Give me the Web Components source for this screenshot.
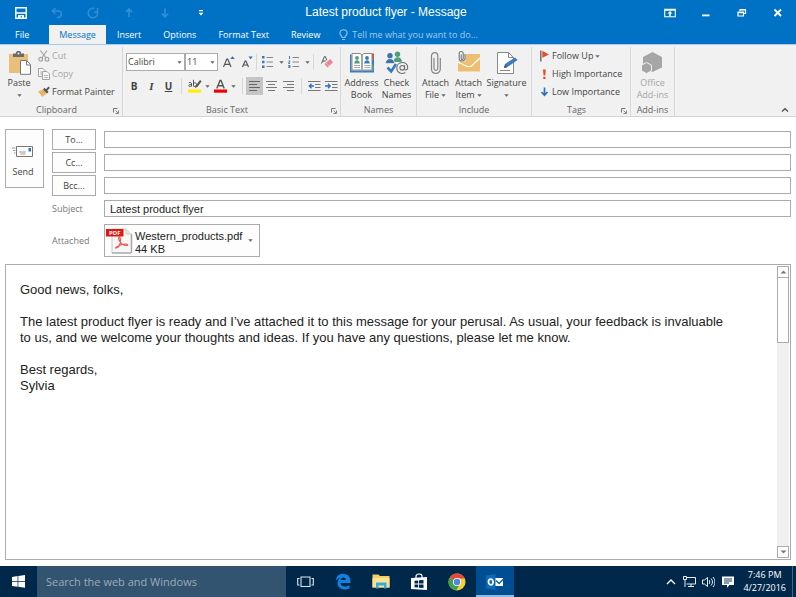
<!DOCTYPE html>
<html lang="en">
<head>
<meta charset="utf-8">
<title>Latest product flyer - Message</title>
<style>
  html, body { height: 100%; margin: 0; }
  body { background: #fff; font: 9px/12px "Open Sans", "Noto Sans", sans-serif; color: #444; }
</style>
</head>
<body>
<mail-window></mail-window>
<script>
const icons = {
  save: [12, 12, '<path d="M.8.8h10.4v10.4H.8z" fill="none" stroke="#fff" stroke-width="1.4"/><path d="M1 5.3h10v1.4H1zM3 8h6v3.5H7V9.2H5.6v2.3H3z" fill="#fff"/>'],
  undo: [12, 12, '<path d="M4.5 1 1.2 4 4.5 7M1.500 4h5.800c4 0 4 5.800.2 6.500H6" fill="none" stroke="#338fd3" stroke-width="1.5"/>'],
  redo: [12, 12, '<path d="M7.200 1.500A4.700 4.700 0 1 0 10.500 5M7 5h3.500V1" fill="none" stroke="#338fd3" stroke-width="1.5"/>'],
  up: [10, 12, '<path d="M5 10V2M1.800 5.300 5 2l3.200 3.300" fill="none" stroke="#338fd3" stroke-width="1.600"/>'],
  down: [10, 12, '<path d="M5 1.500v8M1.800 6.500 5 9.800l3.200-3.300" fill="none" stroke="#338fd3" stroke-width="1.600"/>'],
  custom: [6, 6, '<path d="M1 0h4v1.200H1zM.5 2.800h5L3 5.500z" fill="#fff"/>'],
  ribbonopt: [12, 10, '<path d="M.7 1.200h10.600v7.600H.7zM.7 2.300h10.600" fill="none" stroke="#fff" stroke-width="1.100"/><path d="M6 3 3.500 5.600h1.700v2.600h1.600V5.600h1.700z" fill="#fff"/>'],
  minimize: [10, 10, '<path d="M1 6.500h7.500v1.800H1z" fill="#fff"/>'],
  restore: [10, 10, '<path d="M3 3V1.500h5.500V5.500H7.200M1 4h5.500v4H1zM1 4.600h5.500M3 2h5.500" fill="none" stroke="#fff" stroke-width="1.200"/>'],
  close: [10, 10, '<path d="m1.500 1.500 6.500 6.500M8 1.500 1.500 8" stroke="#fff" stroke-width="1.800"/>'],
  bulb: [9, 12, '<path d="M3 8.500C3 6.500.9 6.300.9 4a3.600 3.200 0 0 1 7.200 0C8.100 6.300 6 6.500 6 8.500zM3 10.500h3" fill="none" stroke="#8fc4ee" stroke-width="1.100"/>'],
  arrow: [5, 3, '<path d="M.3.3h4.400L2.500 2.700z" fill="#666"/>'],
  launch: [6, 6, '<path d="M.5 4.500v-4h4" fill="none" stroke="#777"/><path d="M2.500 2.500 5 5M5.500 2.500v3h-3" fill="none" stroke="#777" stroke-width=".9"/>'],
  collapse: [8, 6, '<path d="M1 4.500 4 1.700l3 2.800" fill="none" stroke="#555" stroke-width="1.400"/>'],
  paste: [24, 24, '<path d="M2 3h19v19H2z" fill="#e9c07b"/><path d="M6 6V2.500h2.800a2.700 2.700 0 0 1 5.400 0H17V6z" fill="#6a6a6a"/><circle cx="11.500" cy="2.600" r="1" fill="#f1f1f1"/><path d="M13.500 9.500h6l4 4v9.800h-10z" fill="#fff" stroke="#777"/><path d="M19.500 9.500v4.500h4" fill="none" stroke="#777"/>'],
  cut: [12, 12, '<g fill="none" stroke="#a3a3a3" stroke-width="1.200"><path d="M2.500.5 8 8M9 .5 3.800 8"/><circle cx="2.700" cy="9.300" r="1.900"/><circle cx="9" cy="9.300" r="1.900"/></g>'],
  copy: [12, 12, '<g fill="#f8f8f8" stroke="#a3a3a3"><path d="M.5.5h4.500l2 2V8.500H.5z"/><path d="M4.500 3.500H9l2.500 2.500v5.500h-7z"/><path d="M2 4h2M2 6h2M6 7.500h4M6 9.500h4" stroke-width=".8"/></g>'],
  painter: [12, 12, '<path d="M5 3.500 9 7.500 6.500 9 4.500 11 0 5.500z" fill="#e9b55e"/><path d="m5 3.500 1.500-1.700L8 3.200 10.500.6l1.400 1.300L9.300 4.600 10.500 6 9 7.500z" fill="#555"/>'],
  grow: [12, 12, '<path d="M.5 11 3.800 3h.9L8 11M1.800 8.300h5" fill="none" stroke="#555" stroke-width="1.200"/><path d="M7.200 3 9.500.3 11.800 3z" fill="#2b72b8"/>'],
  shrink: [12, 12, '<path d="M1.500 11 4.100 5h.8L7.500 11M2.500 9h4" fill="none" stroke="#555" stroke-width="1.200"/><path d="M7.500.6h4.300L9.600 3.200z" fill="#2b72b8"/>'],
  bullets: [12, 12, '<path d="M0 0h2.500v2.500H0zM0 4.700h2.500v2.500H0zM0 9.500h2.500V12H0z" fill="#3c7ab8"/><path d="M4.500 1.500H11M4.500 6H11M4.500 10.500H11" stroke="#888"/>'],
  numbers: [12, 12, '<path d="M1.500 0v3M.5 5h1.500L.5 7.500H2M.3 9.500H2v2H.3M.6 10.500H2" fill="none" stroke="#3c7ab8"/><path d="M4.500 1.500H11M4.500 6H11M4.500 10.500H11" stroke="#888"/>'],
  eraser: [12, 12, '<path d="m.5 7.500 3-7h.8l1.500 3.800M1.800 5h3" fill="none" stroke="#555"/><path d="m3.500 8 5.700-5L12 6.300 6.500 11.500z" fill="#ea8491"/><path d="m5 6.600 3 3.500" stroke="#f6c1c8" stroke-width=".8"/>'],
  hilite: [14, 14, '<path d="M0 10.500h13v3.200H0z" fill="#ffee00"/><g fill="none" stroke="#555"><path d="M.8 3.800c1.500-.8 2.700-.3 2.700 1v2.700M3.500 5.500C.2 5.200.2 7.500 1.700 7.500c1 0 1.800-.6 1.800-1.500M5.500.8v6.700"/><path d="M5.500 4.500c1-1.300 3-.8 3 1s-2 2.500-3 1.300"/></g><path d="m7 9 .8-2.500L12 1l1.600 1.200L9.300 8z" fill="#555"/>'],
  fontcolor: [14, 14, '<path d="M0 10.500h13v3.200H0z" fill="#f00000"/><path d="M2.800 9.500 6 1.500h1l3.200 8M4 6.800h5" fill="none" stroke="#555" stroke-width="1.400"/>'],
  left: [12, 12, '<path d="M0 1.500h11M0 4.500h8M0 7.500h11M0 10.500h8" stroke="#666"/>'],
  center: [12, 12, '<path d="M0 1.500h11M2 4.500h7M0 7.500h11M2 10.500h7" stroke="#777"/>'],
  right: [12, 12, '<path d="M0 1.500h11M4 4.500h7M0 7.500h11M4 10.500h7" stroke="#777"/>'],
  outdent: [13, 12, '<path d="M0 1.500h12.500M7 4.500h5.500M7 7.500h5.500M0 10.500h12.500" stroke="#777"/><path d="M6 6H1.500M3.500 3.800 1.300 6l2.200 2.200" fill="none" stroke="#2b72b8" stroke-width="1.300"/>'],
  indent: [13, 12, '<path d="M0 1.500h12.500M7 4.500h5.500M7 7.500h5.500M0 10.500h12.500" stroke="#777"/><path d="M0 6h5M3 3.800l2.200 2.200L3 8.200" fill="none" stroke="#2b72b8" stroke-width="1.300"/>'],
  address: [24, 22, '<path d="M0 2.500h1.500v16h9.500l1 1 1-1h9.500v-16H24V20.500H0z" fill="#3a7cbd"/><path d="M2 1.500h8l2 1.500v16l-2-1H2zM22 1.500h-8L12 3v16l2-1h8z" fill="#fff" stroke="#888"/><path d="M22.200 1.500H24v5h-1.800z" fill="#d9502f"/><path d="M22.200 7.500H24v5h-1.800z" fill="#3a7cbd"/><path d="M22.200 13.500H24v4h-1.800z" fill="#4d9f77"/><circle cx="7" cy="6" r="1.900" fill="#4d9f77"/><path d="M4.200 11.500c0-4.500 5.600-4.500 5.600 0z" fill="#4d9f77"/><circle cx="17" cy="6" r="1.900" fill="#3a7cbd"/><path d="M14.200 11.500c0-4.500 5.600-4.500 5.600 0z" fill="#3a7cbd"/><path d="M4 13.500h6M4 15.500h6M14.500 13.500h6M14.500 15.500h6" stroke="#aaa"/>'],
  check: [24, 24, '<circle cx="12.500" cy="3.300" r="2.700" fill="#4d9f77"/><path d="M8.500 11c0-6.500 8.500-6.500 8.500 0z" fill="#4d9f77"/><circle cx="5" cy="4.700" r="2.700" fill="#3a72ad"/><path d="M.5 12.500c0-6.500 9-6.500 9 0z" fill="#3a72ad" stroke="#f1f1f1" stroke-width=".7"/><path d="m2.500 16.500 3.700 4L11 13" fill="none" stroke="#3378c0" stroke-width="2.600"/><circle cx="17.500" cy="17" r="6.500" fill="#f1f1f1"/><g fill="none" stroke="#707070" stroke-width="1.100"><circle cx="17.200" cy="16.800" r="2.300"/><path d="M19.600 14.200v3.600c0 2 3.100 1.600 3.100-1.300 0-7-11.200-6.500-10.900.7.200 5.200 5.300 6.300 8.600 4.300"/></g>'],
  clip: [12, 24, '<path d="M4 7v10.500c0 2.500 3.800 2.500 3.800 0V5c0-4.500-6.300-4.500-6.300 0v13c0 5.800 8.800 5.800 8.800 0V7" fill="none" stroke="#858585" stroke-width="1.200"/>'],
  item: [24, 24, '<path d="M1 3h22v17.500H1z" fill="#ecbf72"/><path d="m1 11 9 4.500h4L23 7" fill="none" stroke="#fff" stroke-width="1.100"/><path d="M1 0h7.500v10.500H1z" fill="#f1f1f1"/><path d="M4.200 3.500v4c0 1.500 2 1.500 2 0v-5c0-2.600-4-2.600-4 0v5.200c0 3 5.800 3 5.800 0V3" fill="none" stroke="#777" stroke-width="1.100"/>'],
  sign: [22, 24, '<path d="M1.500 1.500h11l5 5v16h-16z" fill="#fff" stroke="#888"/><path d="M12.500 1.500v5h5" fill="none" stroke="#888"/><path d="m8 16.500 1-3.500L19 6.500 21.500 9l-10 7z" fill="#3a7cbd"/><path d="m8 17 1.200-3 2 2.200z" fill="#444"/><path d="M4 19.500h10" stroke="#888"/>'],
  flag: [10, 12, '<path d="M.8.500v11" stroke="#666" stroke-width="1.400"/><path d="M2.300.8 9 4.400 2.300 7.800z" fill="#e0502c"/>'],
  high: [10, 12, '<path d="M3 1.500h2.800l-.5 6H3.500zM3.300 8.800h2.200V11H3.300z" fill="#e0502c"/>'],
  low: [10, 12, '<path d="M4.500 1.500v7.500M1.500 6l3 3.300L7.500 6" fill="none" stroke="#2f73b7" stroke-width="1.700"/>'],
  addins: [24, 24, '<path d="M11.500 1 21 6v10.500L11.500 21 2 15.800V6z" fill="#a6a6a6"/><path d="m5.500 11.500 5 2.700v5.600l-5 2.700-5-2.700v-5.600z" fill="#a6a6a6" stroke="#f1f1f1"/>'],
  send: [22, 12, '<path d="M4.500.5h16v10h-16z" fill="#fff" stroke="#777"/><path d="M0 2h3.500M1 4.500h2.500M2 7h1.500M7 6h7M8.500 8h5" stroke="#999"/><path d="M16.500 2h2.500v3.500h-2.500z" fill="#3474b3"/>'],
  pdf: [28, 26, '<path d="M6 1h14l5 5v19H6z" fill="#f7f7f7" stroke="#c8c8c8"/><path d="M20 1v5h5" fill="#e6e6e6" stroke="#ccc"/><path d="M6 25h19M25.700 6v19" stroke="#999"/><path d="M10 20c4-1 5.500-7 4-10.500-.8-1.300-2 .5-1 2.500 1.500 3 4 5.500 7.500 5.500 2 0 1.500-1.500-1-1.500-3 0-6 1-8.500 2.700-1.400 1-1.700 1.600-1 1.300z" fill="none" stroke="#ed5751" stroke-width="1.200"/><path d="M0 1h17.500v7.500H0z" fill="#e0160d"/><text x="3" y="7" font-family="Open Sans" font-weight="700" font-size="6" fill="#fff">PDF</text>'],
  sbup: [7, 4, '<path d="M3.500.5 6.500 3.500H.5z" fill="#777"/>'],
  sbdown: [7, 4, '<path d="M.5.5h6l-3 3z" fill="#777"/>'],
  windows: [13, 13, '<path d="m0 1.900 5.600-.8V6H0zM6.300 1 13 0v6H6.300zM0 6.700h5.600v5L0 10.900zM6.300 6.700H13v6l-6.700-.9z" fill="#fff"/>'],
  taskview: [17, 12, '<path d="M4 1h9v9.500H4zM2.500 2.500H.7V9h1.800M14.500 2.500h1.800V9h-1.800" fill="none" stroke="#dfe6ec" stroke-width="1.100"/>'],
  edge: [16, 17, '<path d="M.8 8C1.300 3 4 .8 8 .8c5 0 7.500 3.600 7.500 7.700v1.600H5.500c.3 4 5.500 4.200 9 2.200v3.200C8.500 18 2.800 15.800 2.500 10.300 2.400 7.500 4 5.600 6 4.700 3.600 5 2 6.300.8 8zm4.900-1h5.100c0-3.500-4.700-3.500-5.100 0z" fill="#1380e0"/>'],
  folder: [18, 15, '<path d="M.5.5h6L8 2h9.500v11.500H.5z" fill="#f3cf62"/><path d="M.5 4h17v9.500H.5z" fill="#fbe394"/><path d="M4 8.500h10.500v6H12v-3H6.500v3H4z" fill="#37a9e1"/>'],
  store: [16, 18, '<path d="M0 5 16 4v13L0 16z" fill="#fff"/><path d="M5 5.500V3.500c0-3 6-3.500 6-.5v2" fill="none" stroke="#fff" stroke-width="1.200"/><path d="m3.500 7.800 3.700-.4v3.200H3.500zM8 7.300l4.500-.4v3.700H8zM3.500 11.400h3.700v3.200l-3.700-.4zM8 11.400h4.500v3.700L8 14.700z" fill="#00284b"/>'],
  chrome: [18, 18, '<circle cx="9" cy="9" r="8.500" fill="#f8cf35"/><path d="M9 9 1.600 4.800A8.500 8.500 0 0 1 16.400 4.800L16.800 5.500H9z" fill="#e24a3b"/><path d="M9 9 1.600 4.800A8.500 8.500 0 0 0 8.200 17.500L12 11z" fill="#3ea152"/><circle cx="9" cy="9" r="4" fill="#fff"/><circle cx="9" cy="9" r="3.200" fill="#4a86e8"/>'],
  outlook: [18, 16, '<path d="M9 4h8v8H9z" fill="#fff"/><path d="m10 6.500 3 3 4.500-4.500" fill="none" stroke="#0b62ab" stroke-width="1.500"/><path d="M0 1.500 9.500 0v16L0 14.500z" fill="#0c68b8"/><ellipse cx="4.800" cy="8" rx="2.300" ry="2.800" fill="none" stroke="#fff" stroke-width="1.700"/>'],
  trayup: [10, 8, '<path d="m1 6 4-4 4 4" fill="none" stroke="#fff" stroke-width="1.300"/>'],
  network: [13, 12, '<path d="M3.500 1.500h9v6.500h-9M8 8v2.500M5 10.500h6M.5.500h3v3h-3zM2 3.500V11" fill="none" stroke="#e8edf2"/>'],
  sound: [13, 12, '<path d="M.5 4h2L5.500 1.500v9L2.500 8h-2zM7 4c1 1 1 3 0 4M9 2.500c2 2 2 5 0 7M11 1c2.500 3 2.500 7 0 10" fill="none" stroke="#e8edf2"/>'],
  notes: [12, 12, '<path d="M0 .5h12v8.500H7.500L5 11.800V9H0z" fill="#fff"/><path d="M2 3h8M2 5h8M2 7h5" stroke="#00284b" stroke-width=".9"/>']
};

/* Defines an element whose shadow root is filled from a template. */
function component(tag, markup) {
  const template = document.createElement('template');
  customElements.define(tag, class extends HTMLElement {
    connectedCallback() {
      if (this.shadowRoot) return;
      const root = this.attachShadow({ mode: 'open' });
      template.innerHTML = typeof markup === 'function' ? markup(this) : markup;
      root.append(template.content.cloneNode(true));
    }
  });
}

component('ui-icon', host => {
  const [w, h, art] = icons[host.getAttribute('name')];
  return `<style>:host{display:inline-flex;flex:none}svg{display:block}</style>
  <svg width="${w}" height="${h}" viewBox="0 0 ${w} ${h}" aria-hidden="true">${art}</svg>`;
});

/* Bare button holding one icon, sized by --icon-w and --icon-h. */
component('icon-button', host => `<style>
  :host{display:inline-flex;flex:none}
  button{all:unset;box-sizing:border-box;display:flex;align-items:center;justify-content:center;width:var(--icon-w,18px);height:var(--icon-h,18px)}
  :host([pressed]) button{background:#c5c5c5}
  </style><button aria-label="${host.getAttribute('label') || host.getAttribute('name')}">${host.hasAttribute('name') ? `<ui-icon name="${host.getAttribute('name')}"></ui-icon>` : ''}<slot></slot></button>`);

component('title-bar', `<style>
  :host{display:grid;grid-template-columns:1fr auto 1fr;align-items:center;height:25px;background:#0072c6;color:#fff}
  .quick{display:flex;align-items:center;padding-left:3px;--icon-w:36px;--icon-h:25px}
  h1{margin:0;font:12px/25px "Liberation Sans",Arial,sans-serif;padding-right:24px}
  .win{display:flex;justify-content:flex-end;--icon-w:36px;--icon-h:25px}
  </style>
  <div class="quick"><icon-button name="save"></icon-button><icon-button name="undo"></icon-button><icon-button name="redo"></icon-button><icon-button name="up"></icon-button><icon-button name="down"></icon-button><icon-button name="custom"></icon-button></div>
  <h1>Latest product flyer - Message</h1>
  <div class="win"><icon-button name="ribbonopt"></icon-button><icon-button name="minimize"></icon-button><icon-button name="restore"></icon-button><icon-button name="close"></icon-button></div>`);

component('ribbon-tab', `<style>
  :host{display:flex}
  button{all:unset;padding:0 11px;font-weight:500;line-height:20px;color:#fff}
  :host([first]) button{padding-right:20px}
  :host([active]) button{background:#f1f1f1;color:#0072c6;padding:0 10px}
  </style><button role="tab"><slot></slot></button>`);

component('ribbon-tabs', `<style>
  :host{display:flex;height:19px;background:#0072c6;border-bottom:1px solid #a5cdec;padding-left:4px}
  .tell{display:flex;align-items:center;gap:4px;padding-left:8px;color:#a0cbef;flex:1}
  input{all:unset;flex:1;line-height:19px;color:#a0cbef}
  input::placeholder{color:#a0cbef;opacity:1}
  </style><ribbon-tab first>File</ribbon-tab><ribbon-tab active>Message</ribbon-tab><ribbon-tab>Insert</ribbon-tab><ribbon-tab>Options</ribbon-tab><ribbon-tab>Format Text</ribbon-tab><ribbon-tab>Review</ribbon-tab>
  <label class="tell"><ui-icon name="bulb"></ui-icon><input aria-label="Tell me" placeholder="Tell me what you want to do..."></label>`);

component('ribbon-group', host => `<style>
  :host{display:flex;flex-direction:column;box-sizing:border-box;width:var(--group-w);border-right:1px solid #d8d8d8;height:69px;flex:none}
  .body{flex:1}
  footer{display:flex;align-items:center;height:12px;color:#666}
  span{flex:1;text-align:center;white-space:nowrap}
  footer ui-icon{padding-right:3px;padding-top:2px}
  </style><div class="body"><slot></slot></div><footer><span>${host.getAttribute('label')}</span>${host.hasAttribute('launch') ? '<ui-icon name="launch"></ui-icon>' : ''}</footer>`);

component('big-button', host => `<style>
  :host{display:flex;width:var(--big-w,35px);flex:none}
  button{all:unset;width:100%;display:flex;flex-direction:column;align-items:center;padding-top:2px}
  .pic{height:28px;display:flex;align-items:center}
  .text{line-height:12px;white-space:nowrap;text-align:center}
  .more{display:flex;align-items:center;justify-content:center;gap:2px;height:12px}
  :host([disabled]) button{color:#a6a6a6}
  </style><button ${host.hasAttribute('disabled') ? 'disabled' : ''}><span class="pic"><ui-icon name="${host.getAttribute('name')}"></ui-icon></span><span class="text"><slot></slot></span><span class="more">${host.getAttribute('second') || ''}${host.hasAttribute('menu') ? '<ui-icon name="arrow"></ui-icon>' : ''}</span></button>`);

component('row-button', host => `<style>
  :host{display:flex;height:18px}
  button{all:unset;display:flex;align-items:center;gap:2px;white-space:nowrap}
  :host([disabled]) button{color:#a6a6a6}
  </style><button ${host.hasAttribute('disabled') ? 'disabled' : ''}><ui-icon name="${host.getAttribute('name')}"></ui-icon><slot></slot>${host.hasAttribute('menu') ? '<ui-icon name="arrow"></ui-icon>' : ''}</button>`);

component('combo-box', host => `<style>
  :host{display:grid;align-items:center;width:var(--combo-w);box-sizing:border-box;height:18px;border:1px solid #ababab;background:#fff;flex:none}
  select,ui-icon{grid-area:1/1}
  select{appearance:none;border:0;background:none;margin:0;padding:0 8px 0 1px;font:inherit;color:inherit;width:100%;height:16px}
  ui-icon{justify-self:end;padding-right:2px;pointer-events:none}
  </style><select aria-label="${host.getAttribute('label')}"><option>${host.getAttribute('value')}</option></select><ui-icon name="arrow"></ui-icon>`);

component('mail-ribbon', `<style>
  :host{display:flex;height:72px;box-sizing:border-box;padding-top:2px;background:#f1f1f1;border-bottom:1px solid #d5d5d5}
  .r{display:flex}
  .tools{display:flex;align-items:center;height:18px}
  .t1{padding:6px 0 6px 3px}
  .t2{padding-left:2px}
  .narrow{--icon-w:8px}
  .slim{--icon-w:17px}
  .wide{--icon-w:22px}
  b,i,u{font-size:10px}
  u{font-weight:700}
  i{font-family:"Liberation Serif",serif;font-weight:700;font-size:11px}
  .sep{width:1px;height:16px;background:#d8d8d8;margin:0 2px}
  .t2 .sep{margin:0 4px}
  .end{flex:1;display:flex;align-items:flex-end;justify-content:flex-end}
  .end icon-button{--icon-w:22px;--icon-h:12px}
  </style>
  <ribbon-group label="Clipboard" launch style="--group-w:123px"><div class="r"><big-button name="paste" menu style="--big-w:38px">Paste</big-button><div><row-button name="cut" disabled>Cut</row-button><row-button name="copy" disabled>Copy</row-button><row-button name="painter">Format Painter</row-button></div></div></ribbon-group>
  <ribbon-group label="Basic Text" launch style="--group-w:218px">
    <div class="tools t1"><combo-box label="Font" value="Calibri" style="--combo-w:59px"></combo-box><combo-box label="Size" value="11" style="--combo-w:33px"></combo-box>
      <icon-button name="grow" class="wide"></icon-button><icon-button name="shrink" style="--icon-w:14px"></icon-button><div class="sep"></div>
      <icon-button name="bullets"></icon-button><icon-button name="arrow" class="narrow"></icon-button><icon-button name="numbers"></icon-button><icon-button name="arrow" class="narrow"></icon-button><div class="sep"></div><icon-button name="eraser" class="wide"></icon-button></div>
    <div class="tools t2"><icon-button label="Bold"><b>B</b></icon-button><icon-button label="Italic" class="slim"><i>I</i></icon-button><icon-button label="Underline" class="slim"><u>U</u></icon-button><div class="sep"></div>
      <icon-button name="hilite"></icon-button><icon-button name="arrow" class="narrow"></icon-button><icon-button name="fontcolor"></icon-button><icon-button name="arrow" class="narrow"></icon-button><div class="sep"></div>
      <icon-button name="left" pressed class="slim"></icon-button><icon-button name="center" class="slim"></icon-button><icon-button name="right" class="slim"></icon-button><div class="sep"></div><icon-button name="outdent" class="slim"></icon-button><icon-button name="indent" class="slim"></icon-button></div>
  </ribbon-group>
  <ribbon-group label="Names" style="--group-w:76px"><div class="r" style="padding-left:3px"><big-button name="address" second="Book">Address</big-button><big-button name="check" second="Names">Check</big-button></div></ribbon-group>
  <ribbon-group label="Include" style="--group-w:115px"><div class="r" style="padding-left:2px"><big-button name="clip" second="File" menu style="--big-w:33px">Attach</big-button><big-button name="item" second="Item" menu style="--big-w:33px">Attach</big-button><big-button name="sign" menu style="--big-w:43px">Signature</big-button></div></ribbon-group>
  <ribbon-group label="Tags" launch style="--group-w:99px"><div style="padding-left:8px"><row-button name="flag" menu>Follow Up</row-button><row-button name="high">High Importance</row-button><row-button name="low">Low Importance</row-button></div></ribbon-group>
  <ribbon-group label="Add-ins" style="--group-w:44px"><big-button name="addins" second="Add-ins" disabled style="--big-w:43px">Office</big-button></ribbon-group>
  <div class="end"><icon-button name="collapse" label="Collapse the ribbon"></icon-button></div>`);

component('recipient-row', host => `<style>
  :host{display:grid;grid-template-columns:44px 1fr;column-gap:8px;align-items:center;height:21px}
  button{all:unset;box-sizing:border-box;height:21px;border:1px solid #ababab;background:#fdfdfd;text-align:center;line-height:19px}
  label{color:#777}
  input{all:unset;box-sizing:border-box;height:17px;border:1px solid #ababab;padding:0 5px;font:11px/15px "Liberation Sans",Arial,sans-serif;color:#222}
  </style>${host.hasAttribute('plain') ? `<label for="f">${host.getAttribute('label')}</label>` : `<button>${host.getAttribute('label')}</button>`}<input id="f" aria-label="${host.getAttribute('label')}" value="${host.getAttribute('value') || ''}">`);

component('attachment-row', `<style>
  :host{display:grid;grid-template-columns:44px 1fr;column-gap:8px;align-items:center;color:#777}
  button{all:unset;box-sizing:border-box;justify-self:start;display:flex;align-items:center;height:33px;border:1px solid #ababab;padding:0 6px 0 1px;gap:1px;background:#fdfdfd}
  .name{font:11px/13px "Liberation Sans",Arial,sans-serif;color:#222;padding:4px 5px 0 0}
  .name span{display:block}
  </style><span>Attached</span><button><ui-icon name="pdf"></ui-icon><span class="name"><span>Western_products.pdf</span><span>44 KB</span></span><ui-icon name="arrow"></ui-icon></button>`);

component('compose-header', `<style>
  :host{display:grid;grid-template-columns:39px 1fr;column-gap:8px;padding:12px 5px 7px;align-items:start}
  .send{all:unset;box-sizing:border-box;height:59px;border:1px solid #ababab;background:#fdfdfd;display:flex;flex-direction:column;align-items:center;justify-content:center;gap:8px;padding:6px 3px 0 0}
  .rows{display:flex;flex-direction:column;gap:2px}
  attachment-row{padding-top:3px}
  </style><button class="send"><ui-icon name="send"></ui-icon>Send</button>
  <div class="rows"><recipient-row label="To..."></recipient-row><recipient-row label="Cc..."></recipient-row><recipient-row label="Bcc..."></recipient-row><recipient-row plain label="Subject" value="Latest product flyer"></recipient-row><attachment-row></attachment-row></div>`);

component('message-body', `<style>
  :host{display:flex;flex:1;margin:0 5px 6px;border:1px solid #ababab;min-height:0}
  textarea{all:unset;flex:1;box-sizing:border-box;padding:17px 45px 0 14px;font:13px/16px "Liberation Sans",Arial,sans-serif;color:#222;white-space:pre-wrap;overflow:hidden}
  .bar{display:flex;flex-direction:column;width:12px;background:#f0f0f0;margin:1px}
  .bar icon-button,.thumb{border:1px solid #ababab;background:#fff;box-sizing:border-box}
  .bar icon-button{--icon-w:10px;--icon-h:10px}
  .thumb{height:65px;border-top:0}
  .gap{flex:1}
  </style><textarea aria-label="Message">Good news, folks,

The latest product flyer is ready and I’ve attached it to this message for your perusal. As usual, your feedback is invaluable to us, and we welcome your thoughts and ideas. If you have any questions, please let me know.

Best regards,
Sylvia</textarea><div class="bar"><icon-button name="sbup" label="Scroll up"></icon-button><div class="thumb"></div><div class="gap"></div><icon-button name="sbdown" label="Scroll down"></icon-button></div>`);

component('task-bar', `<style>
  :host{display:flex;height:31px;background:#00284b;color:#fff;flex:none;--icon-w:38px;--icon-h:31px}
  .start{--icon-w:37px}
  input{all:unset;flex:0 1 249px;box-sizing:border-box;padding-left:9px;background:#335470;font-size:11px}
  input::placeholder{color:#9cabb9;opacity:1}
  .active{background:#004e92;box-shadow:inset 0 -2px #8abce6}
  .space{flex:1}
  .tray{display:flex;align-items:center;--icon-w:19px}
  .clock{display:flex;flex-direction:column;align-items:center;justify-content:center;line-height:13px;padding:0 6px 2px}
  .show{width:3px;border-left:1px solid #4a667f}
  </style><icon-button class="start" name="windows" label="Start"></icon-button><input aria-label="Search" placeholder="Search the web and Windows">
  <icon-button name="taskview"></icon-button><icon-button name="edge"></icon-button><icon-button name="folder"></icon-button><icon-button name="store"></icon-button><icon-button name="chrome"></icon-button><icon-button class="active" name="outlook"></icon-button>
  <div class="space"></div><div class="tray"><icon-button name="trayup"></icon-button><icon-button name="network"></icon-button><icon-button name="sound"></icon-button><icon-button name="notes"></icon-button></div>
  <time class="clock"><span>7:46 PM</span><span>4/27/2016</span></time><div class="show"></div>`);

component('mail-window', `<style>
  :host{display:flex;flex-direction:column;min-height:100vh}
  </style><title-bar></title-bar><ribbon-tabs></ribbon-tabs><mail-ribbon></mail-ribbon><compose-header></compose-header><message-body></message-body><task-bar></task-bar>`);
</script>
</body>
</html>
